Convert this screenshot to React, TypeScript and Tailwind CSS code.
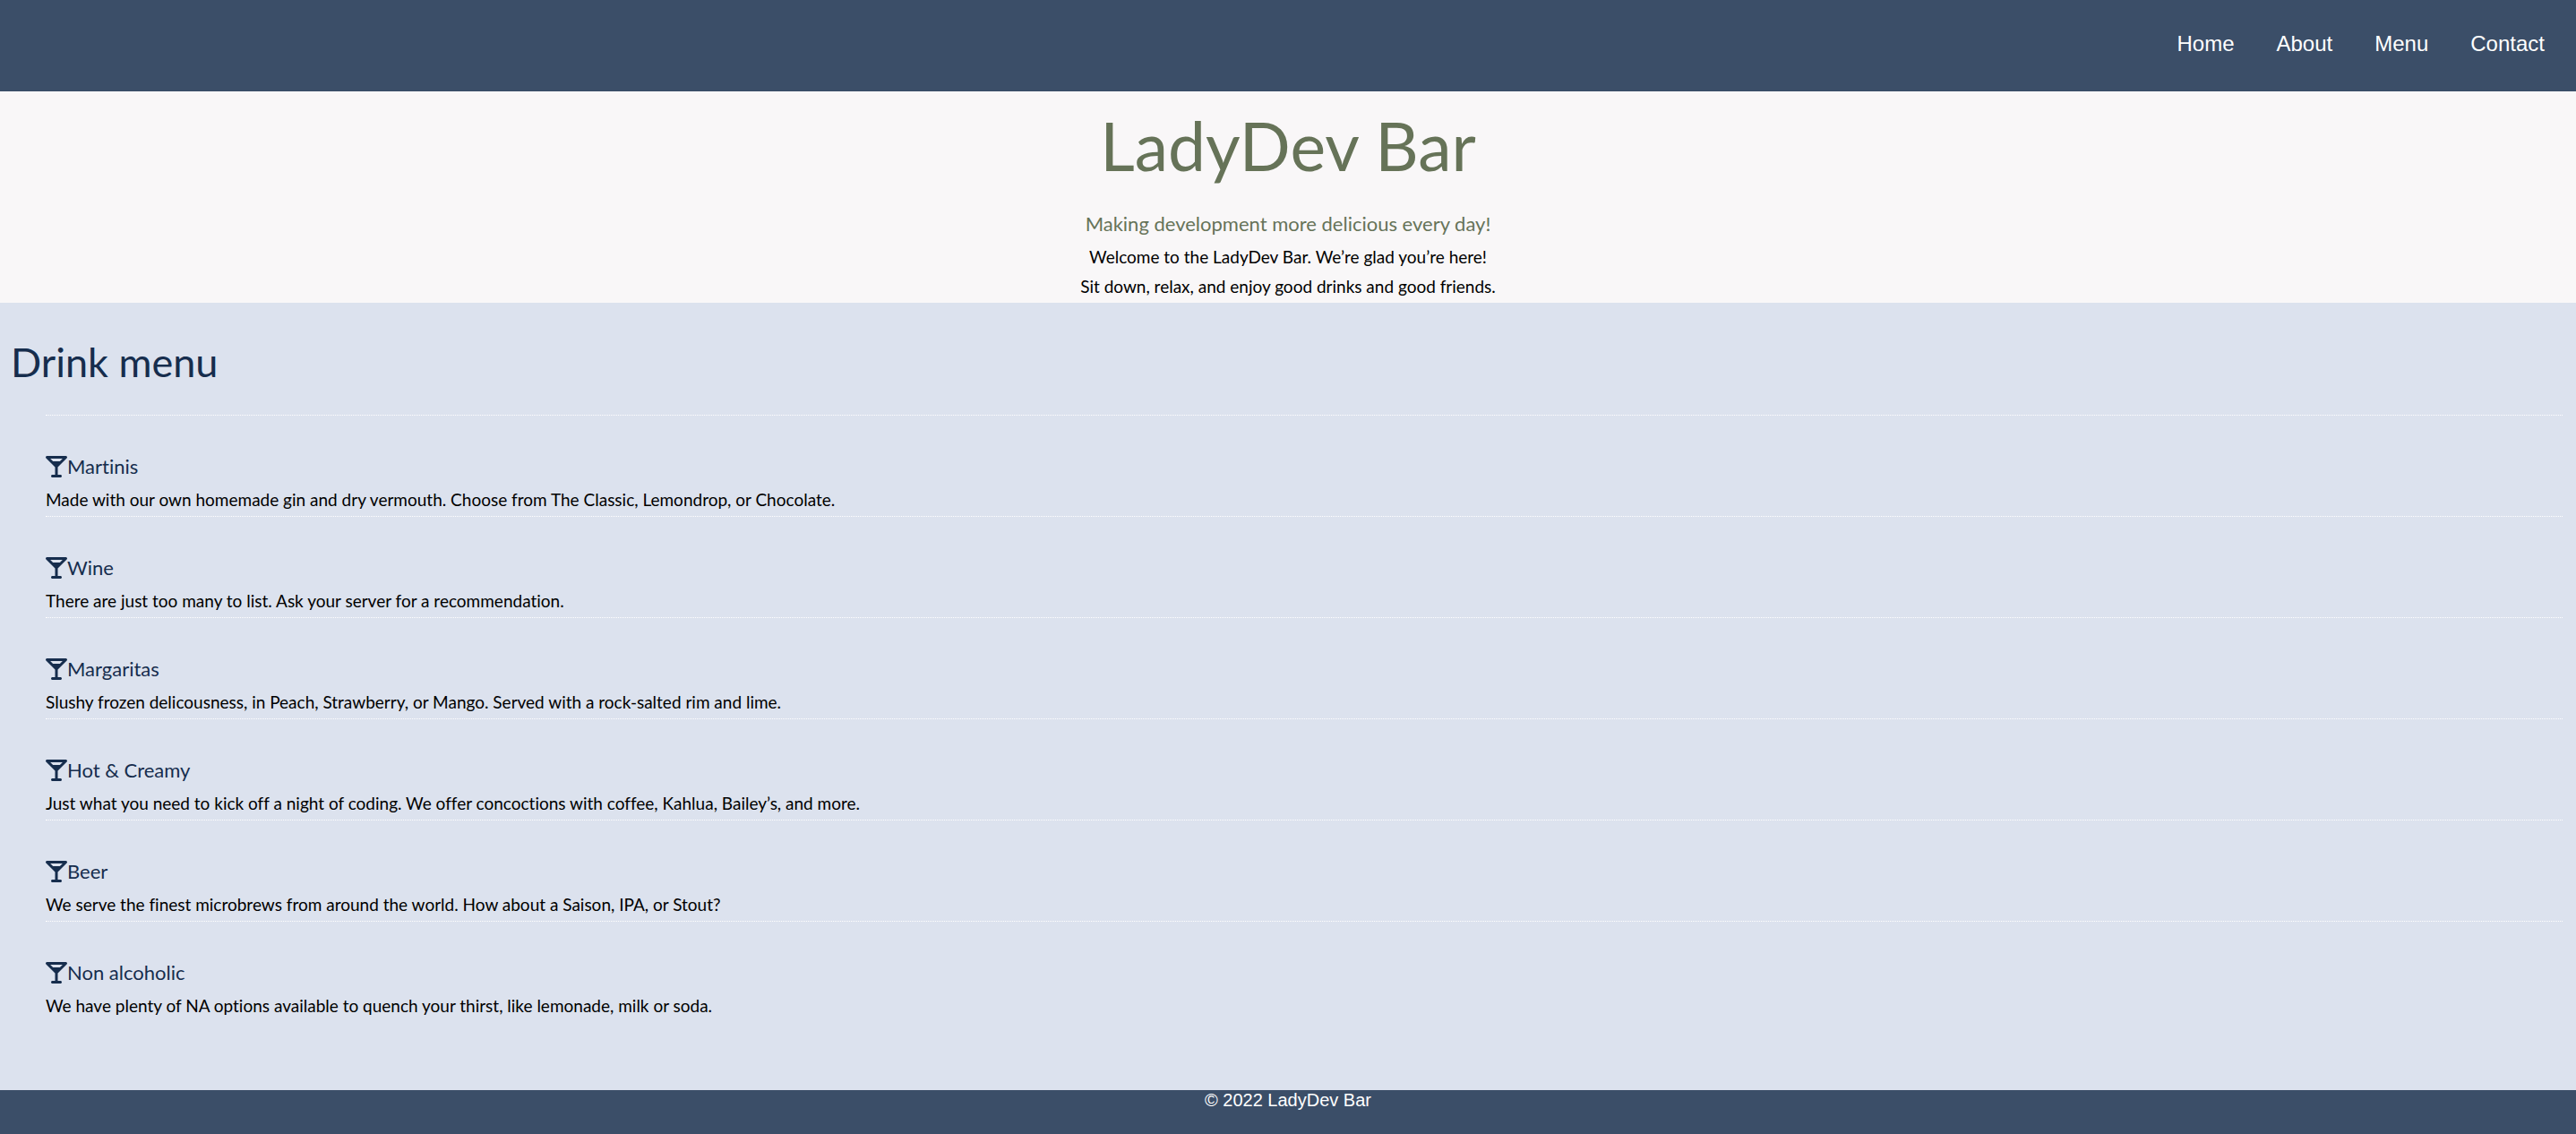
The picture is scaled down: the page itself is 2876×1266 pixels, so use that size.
import { FaMartiniGlass } from "react-icons/fa6";

const links = ["Home", "About", "Menu", "Contact"];

const drinks = [
  {
    name: "Martinis",
    text: "Made with our own homemade gin and dry vermouth. Choose from The Classic, Lemondrop, or Chocolate.",
  },
  {
    name: "Wine",
    text: "There are just too many to list. Ask your server for a recommendation.",
  },
  {
    name: "Margaritas",
    text: "Slushy frozen delicousness, in Peach, Strawberry, or Mango. Served with a rock-salted rim and lime.",
  },
  {
    name: "Hot & Creamy",
    text: "Just what you need to kick off a night of coding. We offer concoctions with coffee, Kahlua, Bailey’s, and more.",
  },
  {
    name: "Beer",
    text: "We serve the finest microbrews from around the world. How about a Saison, IPA, or Stout?",
  },
  {
    name: "Non alcoholic",
    text: "We have plenty of NA options available to quench your thirst, like lemonade, milk or soda.",
  },
];

export default function App() {
  return (
    <div className="flex min-h-screen flex-col bg-[#dce2ee] font-['Lato',sans-serif] text-[19px] leading-[33px] text-black [font-variant-ligatures:none]">
      <nav className="bg-[#3b4e68] pt-[33px] pr-[35px] pb-[37px] font-['Liberation_Sans',sans-serif] text-2xl text-white">
        <ul className="flex justify-end gap-[47px]">
          {links.map((link) => (
            <li key={link}>
              <a href={"#" + link.toLowerCase()}>{link}</a>
            </li>
          ))}
        </ul>
      </nav>

      <header id="home" className="bg-[#f9f7f8] pt-5 pb-0.5 text-center">
        <h1 className="text-[75px] leading-[80px] text-[#667358]">LadyDev Bar</h1>
        <h2 className="pt-7 text-[22px] leading-[40px] text-[#667358]">
          Making development more delicious every day!
        </h2>
        <p>Welcome to the LadyDev Bar. We’re glad you’re here!</p>
        <p>Sit down, relax, and enjoy good drinks and good friends.</p>
      </header>

      <main id="menu" className="flex-1 px-3 pt-[30px]">
        <h2 className="text-[45px] leading-[72px] text-[#162d4d]">Drink menu</h2>
        <ul className="pt-[23px] pr-[3px] pl-[39px]">
          {drinks.map((drink) => (
            <li key={drink.name} className="border-t border-dotted border-white pt-[37px] pb-0.5">
              <h3 className="flex items-center text-[22px] leading-[40px] text-[#162d4d]">
                <FaMartiniGlass className="size-6" aria-hidden="true" />
                {drink.name}
              </h3>
              <p>{drink.text}</p>
            </li>
          ))}
        </ul>
      </main>

      <footer className="bg-[#3b4e68] pb-[26px] text-center font-['Liberation_Sans',sans-serif] text-[20px] leading-[23px] text-white">
        <p>© 2022 LadyDev Bar</p>
      </footer>
    </div>
  );
}
